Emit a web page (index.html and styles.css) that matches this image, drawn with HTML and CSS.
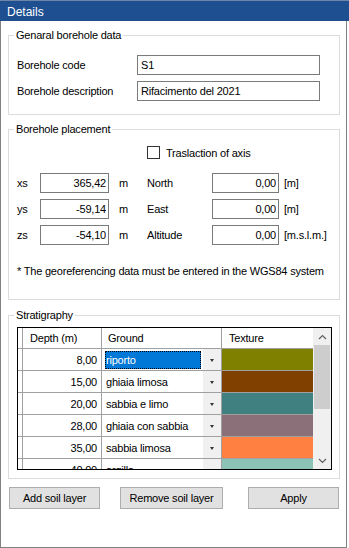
FILE: index.html
```html
<!DOCTYPE html>
<html lang="en">
<head>
    <meta charset="UTF-8">
    <meta name="viewport" content="width=device-width, initial-scale=1.0">
    <title>Details</title>
    <link rel="stylesheet" href="styles.css">
</head>
<body>
    <div class="titlebar">Details</div>

    <div class="panel">
        <fieldset class="group group-general">
            <legend>Genaral borehole data</legend>
            <div class="general-grid">
                <label for="code">Borehole code</label>
                <input type="text" id="code" class="field" value="S1">
                <label for="desc">Borehole description</label>
                <input type="text" id="desc" class="field" value="Rifacimento del 2021">
            </div>
        </fieldset>

        <fieldset class="group group-placement">
            <legend>Borehole placement</legend>
            <div class="coords">
                <label class="check-row">
                    <input type="checkbox" class="check">
                    <span>Traslaction of axis</span>
                </label>

                <span>xs</span>
                <input type="text" class="field num" value="365,42">
                <span class="unit">m</span>
                <span>North</span>
                <input type="text" class="field num" value="0,00">
                <span class="unit-r">[m]</span>

                <span>ys</span>
                <input type="text" class="field num" value="-59,14">
                <span class="unit">m</span>
                <span>East</span>
                <input type="text" class="field num" value="0,00">
                <span class="unit-r">[m]</span>

                <span>zs</span>
                <input type="text" class="field num" value="-54,10">
                <span class="unit">m</span>
                <span>Altitude</span>
                <input type="text" class="field num" value="0,00">
                <span class="unit-r">[m.s.l.m.]</span>
            </div>
            <p class="note">* The georeferencing data must be entered in the WGS84 system</p>
        </fieldset>

        <fieldset class="group group-strati">
            <legend>Stratigraphy</legend>
            <div class="grid">
                <div class="grid-main">
                    <div class="grid-row grid-head">
                        <div class="cell c-rh"></div>
                        <div class="cell c-depth">Depth (m)</div>
                        <div class="cell c-ground">Ground</div>
                        <div class="cell c-tex">Texture</div>
                    </div>
                    <div class="grid-row">
                        <div class="cell c-rh"></div>
                        <div class="cell c-depth">8,00</div>
                        <div class="cell c-ground"><span class="sel">riporto</span><span class="drop"></span></div>
                        <div class="cell c-tex"><span class="swatch sw1"></span></div>
                    </div>
                    <div class="grid-row">
                        <div class="cell c-rh"></div>
                        <div class="cell c-depth">15,00</div>
                        <div class="cell c-ground"><span class="txt">ghiaia limosa</span><span class="drop"></span></div>
                        <div class="cell c-tex"><span class="swatch sw2"></span></div>
                    </div>
                    <div class="grid-row">
                        <div class="cell c-rh"></div>
                        <div class="cell c-depth">20,00</div>
                        <div class="cell c-ground"><span class="txt">sabbia e limo</span><span class="drop"></span></div>
                        <div class="cell c-tex"><span class="swatch sw3"></span></div>
                    </div>
                    <div class="grid-row">
                        <div class="cell c-rh"></div>
                        <div class="cell c-depth">28,00</div>
                        <div class="cell c-ground"><span class="txt">ghiaia con sabbia</span><span class="drop"></span></div>
                        <div class="cell c-tex"><span class="swatch sw4"></span></div>
                    </div>
                    <div class="grid-row">
                        <div class="cell c-rh"></div>
                        <div class="cell c-depth">35,00</div>
                        <div class="cell c-ground"><span class="txt">sabbia limosa</span><span class="drop"></span></div>
                        <div class="cell c-tex"><span class="swatch sw5"></span></div>
                    </div>
                    <div class="grid-row">
                        <div class="cell c-rh"></div>
                        <div class="cell c-depth">40,00</div>
                        <div class="cell c-ground"><span class="txt">argilla</span><span class="drop"></span></div>
                        <div class="cell c-tex"><span class="swatch sw6"></span></div>
                    </div>
                </div>
                <div class="scrollbar">
                    <div class="sb-btn">
                        <svg width="9" height="6" viewBox="0 0 9 6"><polyline points="1,5 4.5,1.5 8,5" fill="none" stroke="#606060" stroke-width="1.2"/></svg>
                    </div>
                    <div class="sb-track"><div class="sb-thumb"></div></div>
                    <div class="sb-btn">
                        <svg width="9" height="6" viewBox="0 0 9 6"><polyline points="1,1 4.5,4.5 8,1" fill="none" stroke="#606060" stroke-width="1.2"/></svg>
                    </div>
                </div>
            </div>
        </fieldset>

        <div class="buttons">
            <button class="btn btn-add">Add soil layer</button>
            <button class="btn btn-remove">Remove soil layer</button>
            <button class="btn btn-apply">Apply</button>
        </div>
    </div>
</body>
</html>
```

FILE: styles.css
```css
body {
    font-family: 'Liberation Sans', Arial, sans-serif;
    font-size: 11px;
    letter-spacing: -0.2px;
    color: #000;
    background-color: #fff;
    margin: 0;
    width: 349px;
    height: 548px;
    overflow: hidden;
}

/* title bar */

.titlebar {
    box-sizing: border-box;
    height: 21px;
    border-top: 1px solid #6d86a8;
    background-color: #1d4f91;
    color: #fff;
    font-size: 12px;
    letter-spacing: 0;
    line-height: 16px;
    padding: 3px 0 0 7px;
}

.panel {
    box-sizing: border-box;
    width: 347px;
    height: 527px;
    border: 1px solid #828282;
    border-top: none;
    padding-top: 7px;
}

/* group boxes */

.group {
    margin: 0 6px 0 7px;
    padding: 0 8px;
    border: 1px solid #dcdcdc;
    min-inline-size: 0;
}

.group legend {
    margin-left: -3px;
    padding: 0 2px;
    line-height: 14px;
}

.group-general {
    padding-top: 13px;
    padding-bottom: 13px;
}

.group-placement {
    margin-top: 7px;
    padding-top: 10px;
    padding-bottom: 21px;
}

.group-strati {
    margin-top: 8px;
    padding-top: 5px;
    padding-bottom: 8px;
}

.field {
    box-sizing: border-box;
    height: 20px;
    margin: 0;
    padding: 0 3px;
    border: 1px solid #7a7a7a;
    background-color: #fff;
    font-family: inherit;
    font-size: 11px;
    letter-spacing: inherit;
    color: #000;
    outline: none;
}

.field.num {
    text-align: right;
    padding-right: 2px;
}

.general-grid {
    display: grid;
    grid-template-columns: 120px 183px;
    row-gap: 6px;
    align-items: center;
}

/* placement */

.coords {
    display: grid;
    grid-template-columns: 23px 69px 38px 65px 67px auto;
    row-gap: 6px;
    align-items: center;
}

.coords .field {
    width: 100%;
}

.check-row {
    grid-column: 4 / -1;
    display: flex;
    align-items: center;
    gap: 6px;
    height: 13px;
    margin-bottom: 8px;
}

.check {
    appearance: none;
    width: 13px;
    height: 13px;
    margin: 0;
    border: 1px solid #333;
    background-color: #fff;
}

.unit {
    padding-left: 10px;
}

.unit-r {
    padding-left: 5px;
    white-space: nowrap;
}

.note {
    margin: 19px 0 0 0;
    line-height: 14px;
    white-space: nowrap;
}

/* stratigraphy grid */

.grid {
    display: flex;
    width: 315px;
    height: 143px;
    box-sizing: border-box;
    border: 1px solid #000;
    overflow: hidden;
}

.grid-main {
    width: 295px;
    overflow: hidden;
}

.grid-row {
    display: flex;
    height: 22px;
    box-sizing: border-box;
    border-bottom: 1px solid #a0a0a0;
}

.grid-head {
    height: 21px;
}

.cell {
    box-sizing: border-box;
    display: flex;
    align-items: center;
    border-right: 1px solid #a0a0a0;
}

.c-rh {
    width: 5px;
}

.c-depth {
    width: 79px;
    justify-content: flex-end;
    padding-right: 4px;
}

.c-ground {
    width: 120px;
    padding-left: 3px;
}

.c-tex {
    width: 91px;
    border-right: none;
}

.grid-head .c-depth {
    justify-content: flex-start;
    padding-left: 7px;
}

.grid-head .c-ground {
    padding-left: 6px;
}

.grid-head .c-tex {
    padding-left: 7px;
}

.txt {
    flex: 1;
    padding-left: 1px;
}

.sel {
    flex: 1;
    box-sizing: border-box;
    height: 18px;
    line-height: 16px;
    margin-right: 2px;
    background-color: #0078d7;
    color: #fff;
    border: 1px dotted #000;
}

.drop {
    position: relative;
    width: 18px;
    align-self: stretch;
    background-color: #f0f0f0;
}

.drop::after {
    content: "";
    position: absolute;
    left: 7px;
    top: 10px;
    border-left: 2px solid transparent;
    border-right: 2px solid transparent;
    border-top: 3px solid #333;
}

.swatch {
    display: block;
    width: 100%;
    height: 100%;
}

.sw1 { background-color: #808000; }
.sw2 { background-color: #804000; }
.sw3 { background-color: #408080; }
.sw4 { background-color: #8b7079; }
.sw5 { background-color: #ff8040; }
.sw6 { background-color: #8cc3b6; }

.scrollbar {
    width: 18px;
    display: flex;
    flex-direction: column;
    background-color: #f0f0f0;
}

.sb-btn {
    height: 17px;
    display: flex;
    align-items: center;
    justify-content: center;
}

.sb-track {
    flex: 1;
    padding: 0 1px;
}

.sb-thumb {
    height: 64px;
    background-color: #cdcdcd;
}

/* buttons */

.buttons {
    display: flex;
    margin-top: 8px;
    padding-left: 8px;
}

.btn {
    box-sizing: border-box;
    height: 22px;
    padding: 0;
    border: 1px solid #adadad;
    background-color: #e1e1e1;
    font-family: inherit;
    font-size: 11px;
    letter-spacing: inherit;
    color: #000;
}

.btn-add {
    width: 91px;
}

.btn-remove {
    width: 103px;
    margin-left: 20px;
}

.btn-apply {
    width: 91px;
    margin-left: 25px;
}
```
